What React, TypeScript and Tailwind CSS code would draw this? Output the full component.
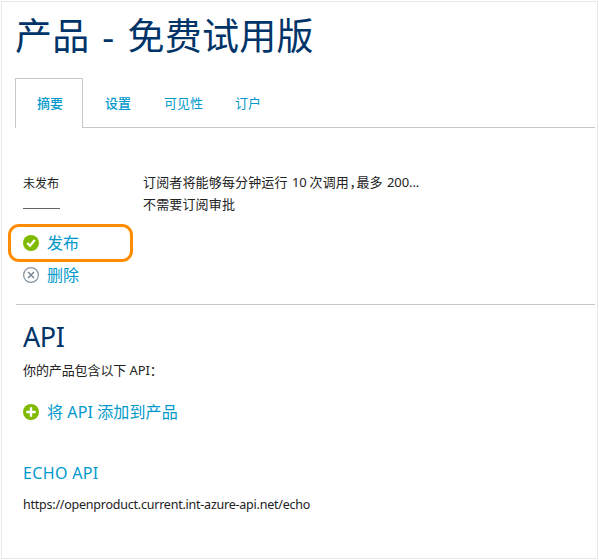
import React from "react";

const fontStack = "font-['Noto_Sans','Noto_Sans_CJK_SC',sans-serif]";

function CheckIcon() {
  return (
    <svg width="16" height="16" viewBox="0 0 16 16" className="shrink-0">
      <circle cx="8" cy="8" r="8" fill="#7fba00" />
      <path d="M4.2 8 7 10.8 11.8 5" fill="none" stroke="#fff" strokeWidth="2.3" />
    </svg>
  );
}

function DeleteIcon() {
  return (
    <svg width="16" height="16" viewBox="0 0 16 16" className="shrink-0">
      <circle cx="8" cy="8" r="7.4" fill="none" stroke="#8693a1" strokeWidth="1.2" />
      <path d="M5 5 11 11M11 5 5 11" fill="none" stroke="#7b8998" strokeWidth="1.6" />
    </svg>
  );
}

function AddIcon() {
  return (
    <svg width="16" height="16" viewBox="0 0 16 16" className="shrink-0">
      <circle cx="8" cy="8" r="8" fill="#7fba00" />
      <path d="M8 3.3V12.7M3.3 8H12.7" fill="none" stroke="#fff" strokeWidth="2.4" />
    </svg>
  );
}

export default function App() {
  return (
    <div className={`h-[560px] w-[599px] overflow-hidden bg-white p-px whitespace-nowrap text-[#222] ${fontStack}`}>
      <div className="flex h-[558px] w-[597px] flex-col border border-[#e9e9e9]">
        <h1 className="ml-[13px] mt-3 flex h-11 items-center text-[37px] leading-[44px] tracking-[0.25px] text-[#003469] [word-spacing:3px]">
          产品 - 免费试用版
        </h1>

        <nav className="ml-[13px] mr-[2px] mt-5 flex h-[50px] text-[13px] leading-5 text-[#0099cc]">
          <div className="flex w-[68px] items-center border border-b-0 border-[#c8c8c8] pb-px pl-[21px] font-medium">摘要</div>
          <div className="flex flex-1 items-center border-b border-[#c8c8c8] pl-[22px]">
            <span className="w-[59px] font-medium">设置</span>
            <span className="w-[71px]">可见性</span>
            <span>订户</span>
          </div>
        </nav>

        <section className="ml-[21px] mt-[43px] flex h-[50px]">
          <div className="w-[120px]">
            <div className="h-[38px] w-[37px] border-b border-[#666] pt-[3px] text-[12px] leading-5">未发布</div>
          </div>
          <div className="text-[13px] leading-[22px] tracking-[0.15px]">
            <div className="flex">
              <span className="w-[149px]">订阅者将能够每分钟运行</span>
              <span className="w-[17.5px] tracking-[-0.2px]">10</span>
              <span className="w-[40px]">次调用</span>
              <span className="w-[7px] tracking-normal [font-feature-settings:'halt']">，</span>
              <span className="w-[30.5px] tracking-[-0.1px]">最多</span>
              <span className="tracking-[-0.1px]">200...</span>
            </div>
            <div>不需要订阅审批</div>
          </div>
        </section>

        <div className="ml-[6px] mt-[3px] flex h-[38px] w-[125px] items-center gap-2 rounded-[11px] border-[3px] border-[#ff8c00] pl-3 text-[16px] leading-6 text-[#0099cc]">
          <CheckIcon />
          <span>发布</span>
        </div>
        <div className="ml-[21px] mt-px flex h-6 items-center gap-2 text-[16px] leading-6 text-[#0099cc]">
          <DeleteIcon />
          <span>删除</span>
        </div>

        <section className="ml-[14px] mr-[2px] mt-[17px] border-t border-[#c8c8c8] pl-[7px]">
          <h2 className="mt-[14px] h-9 text-[27px] leading-9 tracking-[-0.4px] text-[#003469]">API</h2>
          <p className="mt-[5px] h-5 text-[13px] leading-5 tracking-[-0.1px]">你的产品包含以下 API：</p>
          <div className="mt-5 flex h-6 items-center gap-2 text-[16px] leading-6 tracking-[0.1px] text-[#0099cc]">
            <AddIcon />
            <span>将 API 添加到产品</span>
          </div>
          <h3 className="mt-[37px] h-6 text-[16px] leading-6 tracking-[0.35px] text-[#0099cc]">ECHO API</h3>
          <p className="mt-[10px] h-5 text-[12.5px] leading-5 tracking-[-0.23px]">https://openproduct.current.int-azure-api.net/echo</p>
        </section>
      </div>
    </div>
  );
}
